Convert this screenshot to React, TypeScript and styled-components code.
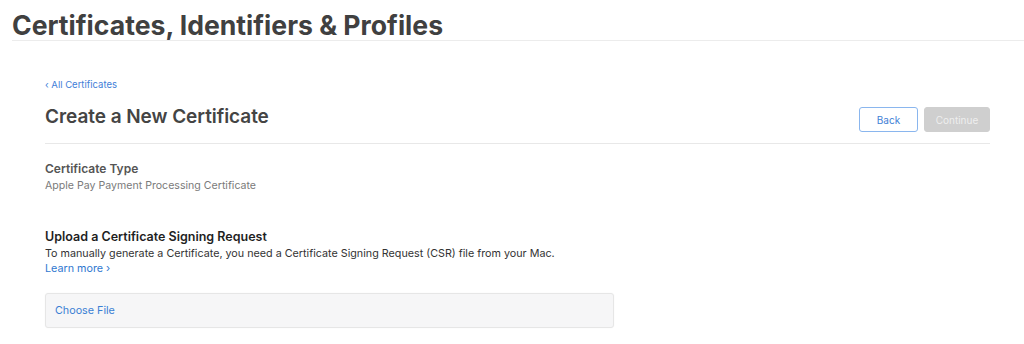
import React from "react";
import styled, { createGlobalStyle } from "styled-components";

const Global = createGlobalStyle`
  html, body { margin: 0; padding: 0; background: #fff; }
  body { font-family: Inter, "Noto Sans", "Liberation Sans", sans-serif; color: #333; }
  * { box-sizing: border-box; }
`;

const Page = styled.div`
  width: 1024px;
  height: 344px;
  overflow: hidden;
  display: flex;
  flex-direction: column;
`;

const Header = styled.header`
  margin-left: 12px;
  padding-top: 10px;
  border-bottom: 1px solid #ececec;
  height: 41px;
`;

const PageTitle = styled.h1`
  margin: 0;
  font-size: 26.6px;
  line-height: 30px;
  font-weight: 700;
  color: #404040;
`;

const Content = styled.main`
  padding: 38px 34px 0 45px;
  display: flex;
  flex-direction: column;
`;

const BackLink = styled.a`
  font-size: 9.5px;
  line-height: 12px;
  color: #3f80d8;
  text-decoration: none;
`;

const TitleRow = styled.div`
  display: flex;
  align-items: flex-start;
  justify-content: space-between;
  margin-top: 11px;
  padding-bottom: 11px;
  border-bottom: 1px solid #e8e8e8;
`;

const SectionTitle = styled.h2`
  margin: 3px 0 0;
  font-size: 19px;
  line-height: 24px;
  font-weight: 600;
  color: #444;
  letter-spacing: -0.05px;
`;

const Actions = styled.div`
  display: flex;
  gap: 6px;
  margin-top: 5px;
`;

const Button = styled.button<{ $primary?: boolean }>`
  height: 25px;
  padding: 0;
  width: ${(p) => (p.$primary ? "66px" : "59px")};
  border-radius: 3px;
  font-family: inherit;
  font-size: 10px;
  border: 1px solid ${(p) => (p.$primary ? "#cfcfcf" : "#8ab6ee")};
  background: ${(p) => (p.$primary ? "#cfcfcf" : "#fff")};
  color: ${(p) => (p.$primary ? "#eee" : "#3f7fd6")};
`;

const Field = styled.div`
  margin-top: 18px;
  display: flex;
  flex-direction: column;
`;

const FieldLabel = styled.div`
  font-size: 12px;
  line-height: 14px;
  font-weight: 600;
  color: #555;
`;

const FieldValue = styled.div`
  margin-top: 3px;
  font-size: 10.6px;
  line-height: 13px;
  color: #7a7a7a;
`;

const Upload = styled.section`
  margin-top: 37px;
  display: flex;
  flex-direction: column;
`;

const UploadTitle = styled.h3`
  margin: 0;
  font-size: 12.5px;
  line-height: 15px;
  font-weight: 600;
  color: #1f1f1f;
`;

const Desc = styled.p`
  margin: 2px 0 0;
  font-size: 10.75px;
  line-height: 15px;
  color: #333;
`;

const Learn = styled.a`
  font-size: 10.75px;
  line-height: 15px;
  color: #2f78d0;
  text-decoration: none;
`;

const FileBox = styled.div`
  margin-top: 17px;
  width: 569px;
  height: 35px;
  background: #f6f6f7;
  border: 1px solid #e6e6e6;
  border-radius: 3px;
  box-shadow: 0 0 2px rgba(0, 0, 0, 0.04);
  display: flex;
  align-items: center;
  padding-left: 9px;
`;

const FileLink = styled.span`
  font-size: 10.75px;
  color: #3a7fd4;
`;

export default function App() {
  return (
    <Page>
      <Global />
      <Header>
        <PageTitle>Certificates, Identifiers &amp; Profiles</PageTitle>
      </Header>
      <Content>
        <BackLink href="#">‹ All Certificates</BackLink>
        <TitleRow>
          <SectionTitle>Create a New Certificate</SectionTitle>
          <Actions>
            <Button>Back</Button>
            <Button $primary disabled>Continue</Button>
          </Actions>
        </TitleRow>
        <Field>
          <FieldLabel>Certificate Type</FieldLabel>
          <FieldValue>Apple Pay Payment Processing Certificate</FieldValue>
        </Field>
        <Upload>
          <UploadTitle>Upload a Certificate Signing Request</UploadTitle>
          <Desc>
            To manually generate a Certificate, you need a Certificate Signing Request (CSR) file from your Mac.
          </Desc>
          <Learn href="#">Learn more ›</Learn>
          <FileBox>
            <FileLink>Choose File</FileLink>
          </FileBox>
        </Upload>
      </Content>
    </Page>
  );
}
